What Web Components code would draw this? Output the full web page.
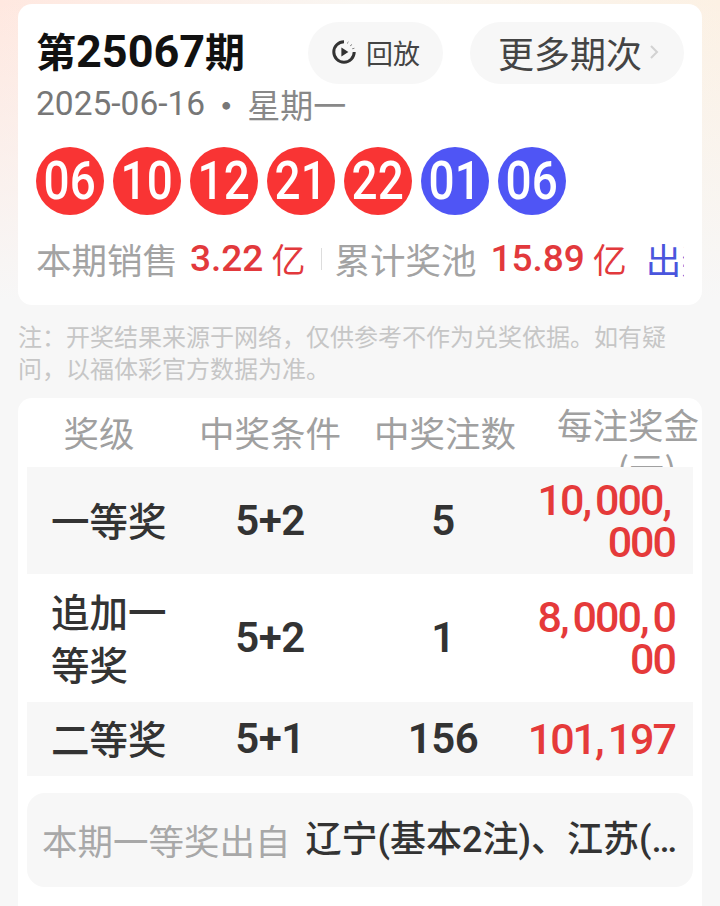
<!DOCTYPE html>
<html lang="zh">
<head>
<meta charset="utf-8">
<title>第25067期</title>
<style>
  html, body { margin: 0; height: 906px; overflow: hidden; }
  body {
    background:
      linear-gradient(to bottom, rgba(247,247,247,0) 0, #f7f7f7 300px),
      linear-gradient(90deg, #ffe8e0 0, #f9f6f2 50%, #fcf1e4 100%);
    font-family: "Roboto", "Noto Sans CJK SC", sans-serif;
  }
</style>
</head>
<body>
<draw-card>
  <span slot="issue">25067</span>
  <span slot="date">2025-06-16</span>
  <lottery-ball>06</lottery-ball>
  <lottery-ball>10</lottery-ball>
  <lottery-ball>12</lottery-ball>
  <lottery-ball>21</lottery-ball>
  <lottery-ball>22</lottery-ball>
  <lottery-ball color="blue">01</lottery-ball>
  <lottery-ball color="blue">06</lottery-ball>
</draw-card>
<note-text>注：开奖结果来源于网络，仅供参考不作为兑奖依据。如有疑问，以福体彩官方数据为准。</note-text>
<prize-table>
  <prize-row level="一等奖" rule="5+2" count="5" money="10,000,000" shade style="height:107px"></prize-row>
  <prize-row level="追加一等奖" rule="5+2" count="1" money="8,000,000" style="height:128px"></prize-row>
  <prize-row level="二等奖" rule="5+1" count="156" money="101,197" shade style="height:74px"></prize-row>
  <winner-box slot="footer">辽宁(基本2注)、江苏(基本2注)、山东(基本1注)</winner-box>
</prize-table>

<script>
const CJK = '"Noto Sans CJK SC", sans-serif';
const NUM = '"Roboto", "Noto Sans CJK SC", sans-serif';

class LotteryBall extends HTMLElement {
  constructor() {
    super();
    this.attachShadow({ mode: 'open' });
    this.shadowRoot.innerHTML = `
      <style>
        :host { display: flex; width: 68px; height: 68px; border-radius: 50%; background: #f93434; color: #fff;
                align-items: center; justify-content: center; overflow: hidden; }
        :host([color="blue"]) { background: #4f55f5; }
        span { display: block; font: 500 54px/68px ${NUM}; transform: scaleX(.85); white-space: nowrap; }
      </style>
      <span><slot></slot></span>`;
  }
}
customElements.define('lottery-ball', LotteryBall);

class PillButton extends HTMLElement {
  constructor() {
    super();
    this.attachShadow({ mode: 'open' });
    this.shadowRoot.innerHTML = `
      <style>
        :host { display: flex; align-items: center; height: 62px; border-radius: 31px; background: #f7f7f7;
                color: #444; font-family: ${CJK}; box-sizing: border-box; white-space: nowrap; padding-bottom: 2px; }
      </style>
      <slot></slot>`;
  }
}
customElements.define('pill-button', PillButton);

class DrawCard extends HTMLElement {
  constructor() {
    super();
    this.attachShadow({ mode: 'open' });
    this.shadowRoot.innerHTML = `
      <style>
        :host { display: block; margin: 4px 18px 0; height: 301px; box-sizing: border-box; padding: 18px 18px 0;
                background: #fff; border-radius: 14px; }
        .top { display: flex; align-items: center; height: 62px; }
        .title { font: 700 40px/58px ${CJK}; color: #111; flex: 1; padding-bottom: 4px; white-space: nowrap; }
        .title ::slotted(span) { font: 700 45px/58px ${NUM}; }
        .replay { width: 135px; padding-left: 24px; font-size: 27px; margin-right: 27px; }
        .replay svg { margin-right: 10px; flex: none; }
        .more { width: 214px; padding-left: 28px; font-size: 36px; }
        .more svg { margin-left: 7px; flex: none; }
        .date { height: 40px; display: flex; align-items: center; font: 400 33.5px/40px ${NUM}; color: #777; white-space: nowrap; }
        .date .dot { width: 42px; text-align: center; font-family: ${CJK}; font-size: 30px; font-weight: 700; }
        .date .week { font-family: ${CJK}; font-size: 33px; color: #888; }
        .balls { display: flex; gap: 9px; margin-top: 23px; }
        .sales { display: flex; align-items: center; height: 44px; margin-top: 22px; overflow: hidden; white-space: nowrap;
                 font: 400 35.5px/44px ${CJK}; color: #a3a3a3; }
        .sales span { flex: none; }
        .val { color: #e2393c; display: flex; align-items: center; font-size: 34px; }
        .val b { font: 500 37px/44px ${NUM}; margin-right: 8px; }
        .sep { width: 1px; height: 22px; background: #ddd; margin: 0 12px 0 16px; }
        .link { color: #4a55dd; margin-left: 19px; }
      </style>
      <div class="top">
        <div class="title">第<slot name="issue"></slot>期</div>
        <pill-button class="replay">
          <svg width="24" height="24" viewBox="0 0 24 24" fill="none" stroke="#333" stroke-width="3">
            <path d="M12 1.8A10.2 10.2 0 1 0 22.2 12"/>
            <path d="M15.6 2.6l.4.2M19 5l.3.3M21.2 8.2l.2.5" stroke-width="2.4"/>
            <path d="M9.4 7.6l7 4.4-7 4.4z" fill="#333" stroke="none"/>
          </svg>
          回放
        </pill-button>
        <pill-button class="more">
          更多期次
          <svg width="10" height="16" viewBox="0 0 10 16" fill="none" stroke="#d2d2d2" stroke-width="2"><path d="M2 2l6 6-6 6"/></svg>
        </pill-button>
      </div>
      <div class="date"><slot name="date"></slot><span class="dot">·</span><span class="week">星期一</span></div>
      <div class="balls"><slot></slot></div>
      <div class="sales">
        <span>本期销售</span>
        <span class="val" style="margin-left:12px"><b>3.22</b>亿</span>
        <span class="sep"></span>
        <span>累计奖池</span>
        <span class="val" style="margin-left:14px"><b>15.89</b>亿</span>
        <span class="link">出奖详情</span>
      </div>`;
  }
}
customElements.define('draw-card', DrawCard);

class NoteText extends HTMLElement {
  constructor() {
    super();
    this.attachShadow({ mode: 'open' });
    this.shadowRoot.innerHTML = `
      <style>
        :host { display: block; margin: 15px 28px 0 18px; font: 400 24px/32px ${CJK}; color: #c6c6c6; height: 78px; }
      </style>
      <slot></slot>`;
  }
}
customElements.define('note-text', NoteText);

const COLS = 'grid-template-columns: 144px 198px 152px 172px;';

class PrizeRow extends HTMLElement {
  constructor() {
    super();
    this.attachShadow({ mode: 'open' });
  }
  connectedCallback() {
    const a = n => this.getAttribute(n);
    // 콤마만 간격을 따로 줘야 줄바꿈 위치가 맞음
    const money = a('money').replace(/,/g, '<span class="c">,</span>');
    this.shadowRoot.innerHTML = `
      <style>
        :host { display: grid; ${COLS} align-items: center; }
        :host([shade]) { background: #f7f7f7; }
        .level { font: 500 38.5px/53px ${CJK}; color: #333; padding: 0 0 3px 24px; }
        .num { font: 600 42px/48px ${NUM}; letter-spacing: -.5px; color: #333; text-align: center; }
        .count { padding-right: 4px; }
        .money { font: 500 43px/42px ${NUM}; letter-spacing: -2px; color: #e53a3a; text-align: right;
                 word-break: break-all; padding: 0 18px 0 3px; }
        .c { letter-spacing: 3px; }
      </style>
      <div class="level">${a('level')}</div>
      <div class="num rule">${a('rule')}</div>
      <div class="num count">${a('count')}</div>
      <div class="money">${money}</div>`;
  }
}
customElements.define('prize-row', PrizeRow);

class WinnerBox extends HTMLElement {
  constructor() {
    super();
    this.attachShadow({ mode: 'open' });
    this.shadowRoot.innerHTML = `
      <style>
        :host { display: flex; align-items: center; height: 94px; margin-top: 17px; padding: 0 15px; background: #f7f7f7;
                border-radius: 18px; box-sizing: border-box; white-space: nowrap; }
        .from { font: 400 35.5px/44px ${CJK}; color: #a8a8a8; flex: none; margin-right: 15px; }
        .where { font: 500 36px/44px ${NUM}; color: #333; overflow: hidden; text-overflow: ellipsis; flex: 1; }
      </style>
      <span class="from">本期一等奖出自</span>
      <span class="where"><slot></slot></span>`;
  }
}
customElements.define('winner-box', WinnerBox);

class PrizeTable extends HTMLElement {
  constructor() {
    super();
    this.attachShadow({ mode: 'open' });
    this.shadowRoot.innerHTML = `
      <style>
        :host { display: block; margin: 0 18px; padding: 0 9px; height: 600px; background: #fff; border-radius: 14px 14px 0 0; }
        .head { display: grid; ${COLS} height: 69px; overflow: hidden; margin-right: -9px; text-align: center; font: 400 35.5px/40px ${CJK}; color: #a0a0a0; }
        .head div { padding-top: 14px; }
        .head .wrap { padding: 4px 0 0; width: 146px; margin-left: 36px; line-height: 44px; white-space: nowrap; text-align: left; }
        .head .unit { display: block; margin-left: 60px; }
        .head .wide { margin: 0 -10px; }
      </style>
      <div class="head">
        <div>奖级</div>
        <div><span class="wide">中奖条件</span></div>
        <div>中奖注数</div>
        <div class="wrap">每注奖金<span class="unit">(元)</span></div>
      </div>
      <slot></slot>
      <slot name="footer"></slot>`;
  }
}
customElements.define('prize-table', PrizeTable);
</script>
</body>
</html>
